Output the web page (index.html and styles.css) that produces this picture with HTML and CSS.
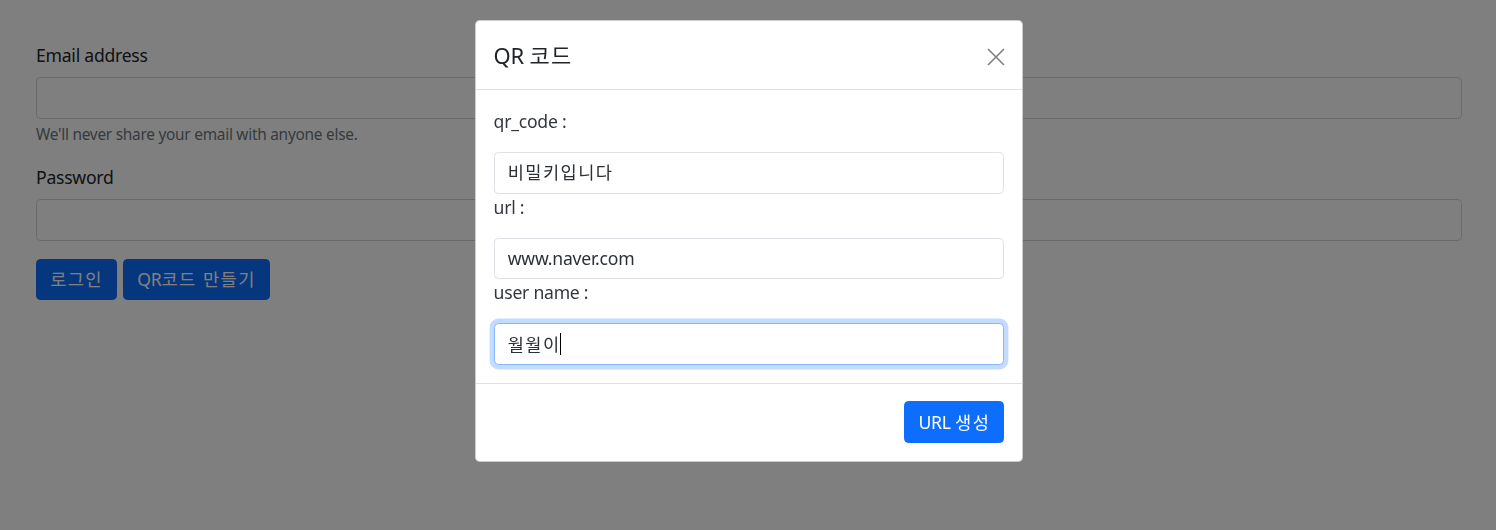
FILE: index.html
```html
<!DOCTYPE html>
<html lang="ko">
<head>
<meta charset="utf-8">
<title>QR 코드</title>
<link rel="stylesheet" href="styles.css">
</head>
<body>
<main class="page">
  <form class="login">
    <div class="field">
      <label class="label" for="email">Email address</label>
      <input class="control" id="email" type="email">
      <div class="help">We'll never share your email with anyone else.</div>
    </div>
    <div class="field">
      <label class="label" for="pw">Password</label>
      <input class="control" id="pw" type="password">
    </div>
    <div class="actions">
      <button class="btn" type="button"><span class="ko">로그인</span></button>
      <button class="btn" type="button">QR<span class="ko">코드 만들기</span></button>
    </div>
  </form>
</main>
<div class="backdrop"></div>
<div class="modal">
  <div class="modal-header">
    <h5 class="modal-title">QR <span class="ko">코드</span></h5>
    <button class="close" type="button" aria-label="Close">
      <svg viewBox="0 0 18 18" width="18" height="18"><path d="M1 1L17 17M17 1L1 17" stroke="#000" stroke-width="1.6" fill="none"/></svg>
    </button>
  </div>
  <div class="modal-body">
    <label class="m-label">qr_code :</label>
    <div class="control m-control"><span class="ko">비밀키입니다</span></div>
    <label class="m-label">url :</label>
    <div class="control m-control">www.naver.com</div>
    <label class="m-label">user name :</label>
    <div class="control m-control focused"><span class="ko">월월이</span><span class="caret"></span></div>
  </div>
  <div class="modal-footer">
    <button class="btn btn-bright" type="button">URL <span class="ko">생성</span></button>
  </div>
</div>
</body>
</html>
```
FILE: styles.css
```css
html, body {
  margin: 0;
  padding: 0;
  background: #fff;
}
body {
  font-family: "Noto Sans", "Noto Sans CJK KR", sans-serif;
  font-size: 17.6px;
  line-height: 26.4px;
  letter-spacing: -0.25px;
  color: #212529;
  height: 530px;
  overflow: hidden;
}
.ko {
  font-family: "Noto Sans CJK KR", sans-serif;
  letter-spacing: 1.4px;
  line-height: 1;
}
.page {
  padding: 42px 34px 0 36px;
}
.field {
  margin-bottom: 17.6px;
}
.label {
  display: block;
  margin-bottom: 8.8px;
}
.control {
  display: block;
  width: 100%;
  box-sizing: border-box;
  height: 41.8px;
  padding: 6.6px 13.2px;
  font: inherit;
  color: #2b3035;
  background: #fff;
  border: 1px solid #ced4da;
  border-radius: 4.4px;
}
.help {
  margin-top: 4.4px;
  font-size: 15.4px;
  line-height: 23.1px;
  color: #6c757d;
}
.actions {
  display: flex;
  gap: 6px;
}
.btn {
  font: inherit;
  letter-spacing: inherit;
  height: 41.8px;
  padding: 6.6px 13.2px;
  color: #fff;
  background: #0d6efd;
  border: 1px solid #0d6efd;
  border-radius: 4.4px;
  line-height: 26.4px;
}
.backdrop {
  position: fixed;
  inset: 0;
  background: rgba(0, 0, 0, 0.5);
}
.modal {
  position: absolute;
  top: 20px;
  left: 475px;
  width: 548px;
  background: #fff;
  border: 1px solid rgba(0, 0, 0, 0.2);
  border-radius: 4.8px;
  box-sizing: border-box;
  color: #33383d;
}
.modal-header {
  display: flex;
  align-items: center;
  justify-content: space-between;
  padding: 17.6px;
  border-bottom: 1px solid #dee2e6;
}
.modal-title {
  margin: 0;
  font-size: 22px;
  line-height: 33px;
  height: 33px;
  font-weight: 400;
  color: #212529;
}
.close {
  display: flex;
  padding: 0;
  margin: 4px -1px 0 0;
  background: none;
  border: 0;
  opacity: 0.5;
}
.modal-body {
  padding: 17.6px;
}
.m-label {
  display: block;
  margin-bottom: 17.6px;
}
.m-control {
  border-color: #dee2e6;
}
.focused {
  border-color: #86b7fe;
  box-shadow: 0 0 0 4.4px rgba(13, 110, 253, 0.25);
}
.caret {
  display: inline-block;
  width: 1px;
  height: 22px;
  background: #000;
  vertical-align: -4px;
  margin-left: -1px;
}
.modal-footer {
  display: flex;
  justify-content: flex-end;
  padding: 13.2px;
  border-top: 1px solid #dee2e6;
}
.btn-bright {
  margin: 4.4px;
}
```
